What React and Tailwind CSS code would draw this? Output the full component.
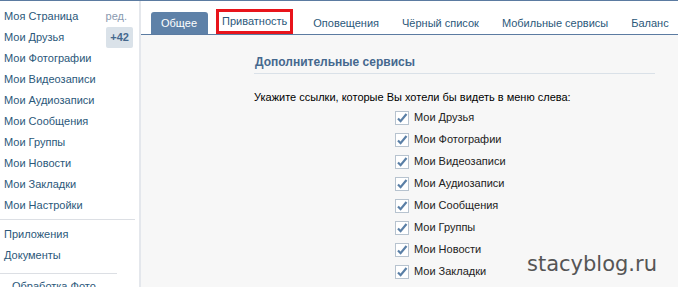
const menu = [
  'Моя Страница',
  'Мои Друзья',
  'Мои Фотографии',
  'Мои Видеозаписи',
  'Мои Аудиозаписи',
  'Мои Сообщения',
  'Мои Группы',
  'Мои Новости',
  'Мои Закладки',
  'Мои Настройки',
]

const tabs = ['Оповещения', 'Чёрный список', 'Мобильные сервисы', 'Баланс']

const services = [
  'Мои Друзья',
  'Мои Фотографии',
  'Мои Видеозаписи',
  'Мои Аудиозаписи',
  'Мои Сообщения',
  'Мои Группы',
  'Мои Новости',
  'Мои Закладки',
]

function Check() {
  return (
    <svg width="14" height="14" viewBox="0 0 14 14" className="shrink-0">
      <rect x="0.5" y="0.5" width="13" height="13" fill="#fff" stroke="#b7c3cf" />
      <path d="M3 7.5 L5.6 10.2 L11.5 3" fill="none" stroke="#5a7fa6" strokeWidth="2.2" />
    </svg>
  )
}

export default function App() {
  return (
    <div className="relative flex h-[287px] w-[678px] overflow-hidden border-t border-[#5b7ba1] bg-white font-['Liberation_Sans',Arial,sans-serif] text-[11px]">
      {/* Left menu */}
      <div className="w-[141px] shrink-0 border-r-2 border-[#e4e7ec] bg-white pt-[5px]">
        {menu.map((m, i) => (
          <div key={m} className="flex h-[21px] items-center justify-between pl-[4px] pr-[6px] text-[#2b587a]">
            <span>{m}</span>
            {i === 0 && <span className="mr-[6px] text-[#8a9ab0]">ред.</span>}
            {i === 1 && (
              <span className="rounded-[2px] bg-[#dae2e9] px-[4px] py-[2px] font-bold text-[#45688e]">+42</span>
            )}
          </div>
        ))}
        <div className="mt-[3px] mb-[4px] h-px w-[135px] bg-[#dcdfe4]" />
        <div className="flex h-[21px] items-center pl-[4px] text-[#2b587a]">Приложения</div>
        <div className="flex h-[21px] items-center pl-[4px] text-[#2b587a]">Документы</div>
        <div className="mt-[7px] h-px w-[117px] bg-[#dcdfe4]" />
        <div className="pl-[12px] pt-[4px] text-[#2b587a]">Обработка Фото</div>
      </div>

      {/* Main */}
      <div className="flex min-w-0 flex-1 flex-col">
        <div className="flex h-[34px] items-end whitespace-nowrap border-b border-[#5b7ba1] bg-white pl-[10px]">
          <div className="flex h-[22px] items-center rounded-t-[3px] bg-[#5e81a8] pl-[10px] pr-[11px] text-white">
            Общее
          </div>
          <div className="ml-[8px] flex h-[25px] items-center border-[3px] border-[#e8141b] px-[3px] text-[#2b587a]">
            Приватность
          </div>
          {tabs.map((t, i) => (
            <div
              key={t}
              className={`flex h-[22px] items-center px-[10px] text-[#2b587a] ${i === 0 ? 'ml-[10px]' : 'ml-[3px]'}`}
            >
              {t}
            </div>
          ))}
        </div>
        <div className="flex-1 bg-[#f7f7f7] pl-[113px] pr-[23px] pt-[18px]">
          <div className="border-b border-[#dae1e8] pb-[2px] pl-[1px] text-[12px] font-bold text-[#45688e]">
            Дополнительные сервисы
          </div>
          <div className="pt-[15px] text-black">Укажите ссылки, которые Вы хотели бы видеть в меню слева:</div>
          <div className="flex flex-col pl-[141px] pt-[1px]">
            {services.map((s) => (
              <div key={s} className="flex h-[22px] items-center gap-[5px] text-[#222]">
                <Check />
                <span>{s}</span>
              </div>
            ))}
          </div>
        </div>
      </div>

      <div className="absolute left-[527px] top-[248px] font-['DejaVu_Sans',sans-serif] text-[21px] text-[#555]">
        stacyblog.ru
      </div>
    </div>
  )
}
